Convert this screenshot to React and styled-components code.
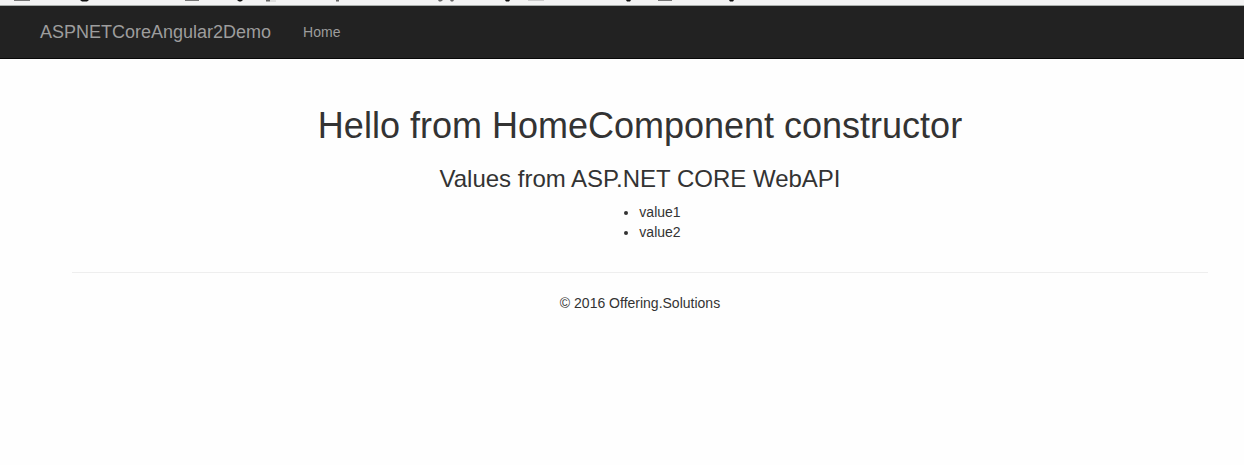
import React from "react";
import styled, { createGlobalStyle } from "styled-components";

const GlobalStyle = createGlobalStyle`
  *, *::before, *::after { box-sizing: border-box; }
  body {
    margin: 0;
    background: #fefefe;
    color: #333;
    font-family: "Liberation Sans", Arial, sans-serif;
    font-size: 14px;
    line-height: 20px;
  }
`;

const BrowserEdge = styled.div`
  height: 6px;
  background: #f3f3f3;
  border-bottom: 1px solid #a9aeab;
  overflow: hidden;
`;

const EdgeMarks = styled.svg`
  display: block;
`;

const Navbar = styled.nav`
  display: flex;
  align-items: center;
  height: 53px;
  padding-left: 40px;
  gap: 32px;
  background: #222;
  border-bottom: 1px solid #080808;
`;

const Brand = styled.a`
  color: #9d9d9d;
  font-size: 18px;
  text-decoration: none;
`;

const NavLink = styled.a`
  color: #9d9d9d;
  text-decoration: none;
`;

const Container = styled.div`
  padding: 47px 36px 0 72px;
`;

const Content = styled.main`
  text-align: center;
`;

const Title = styled.h1`
  margin: 0 0 20px;
  font-size: 36px;
  font-weight: 400;
  line-height: 40px;
`;

const Subtitle = styled.h3`
  margin: 0 0 10px;
  font-size: 24px;
  font-weight: 400;
  line-height: 26px;
`;

const ValueList = styled.ul`
  width: fit-content;
  margin: 0 auto 30px;
  padding: 0 0 0 40px;
  text-align: left;
`;

const Divider = styled.hr`
  margin: 0 0 20px;
  border: 0;
  border-top: 1px solid #eee;
`;

const Footer = styled.footer`
  text-align: center;
`;

const values = ["value1", "value2"];

export default function App() {
  return (
    <>
      <GlobalStyle />
      <BrowserEdge>
        <EdgeMarks width="744" height="5" aria-hidden="true">
          <path d="M14 0h16v1H14zM185 0h14v1h-14zM658 0h14v1h-14z" fill="#777" />
          <path d="M528 0h16v1h-16z" fill="#ccc" />
          <path
            d="M80 0h9l-2 1.5h-5zM237 0h6l-2 1.5h-2zM505 0h5l-1 1.5h-3zM626 0h5l-1 1.5h-3zM729 0h5l-1 1.5h-3z"
            fill="#111"
          />
          <path d="M266 0h4v1.5h-4zM336 0h3v1.5h-3zM438 0h5l-2 1.5h-2zM450 0h4l-1 1.5h-2z" fill="#666" />
          <path d="M270 1h6" stroke="#ccc" />
        </EdgeMarks>
      </BrowserEdge>
      <Navbar>
        <Brand href="#">ASPNETCoreAngular2Demo</Brand>
        <NavLink href="#home">Home</NavLink>
      </Navbar>
      <Container>
        <Content>
          <Title>Hello from HomeComponent constructor</Title>
          <Subtitle>Values from ASP.NET CORE WebAPI</Subtitle>
          <ValueList>
            {values.map((value) => (
              <li key={value}>{value}</li>
            ))}
          </ValueList>
        </Content>
        <Divider />
        <Footer>© 2016 Offering.Solutions</Footer>
      </Container>
    </>
  );
}
